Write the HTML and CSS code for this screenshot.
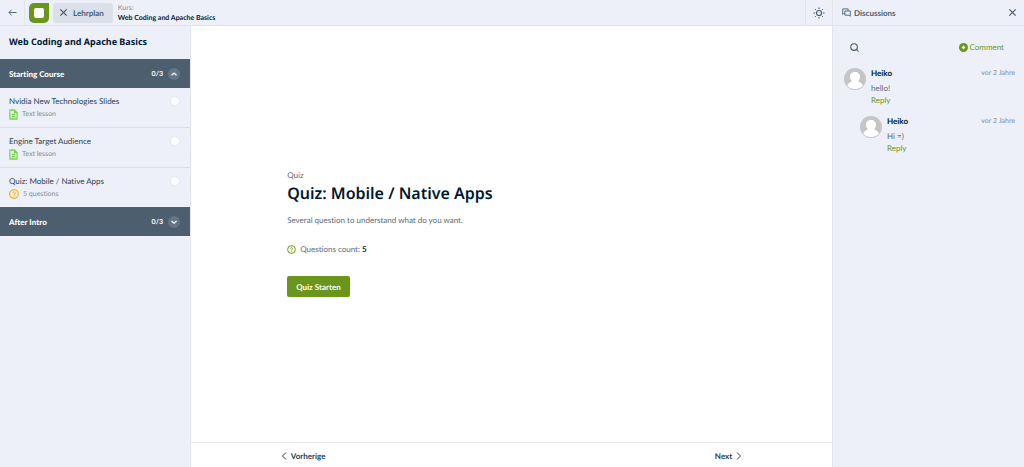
FILE: index.html
```html
<!DOCTYPE html>
<html lang="de">
<head>
<meta charset="utf-8">
<meta name="viewport" content="width=device-width, initial-scale=1">
<title>Web Coding and Apache Basics</title>
<link rel="stylesheet" href="styles.css">
</head>
<body>
<svg class="defs" aria-hidden="true">
  <symbol id="doc" viewBox="0 0 10 12"><path d="M1 1h5l3 3v7H1z M6 1v3h3 M3 6h4 M3 8.500h4" fill="none" stroke="currentColor" stroke-width="1.400" stroke-linejoin="round"/></symbol>
  <symbol id="question" viewBox="0 0 12 12"><circle cx="6" cy="6" r="5.200" fill="none" stroke="currentColor" stroke-width="1.300"/><path d="M4.500 4.700a1.500 1.300 0 1 1 2.200 1.200q-.7.300-.7 1 M6 8.200v1" fill="none" stroke="currentColor" stroke-width="1.200"/></symbol>
  <symbol id="cross" viewBox="0 0 10 10"><path d="M1.500 1.500l7 7M8.500 1.500l-7 7" fill="none" stroke="currentColor" stroke-width="1.400"/></symbol>
  <symbol id="avatar" viewBox="0 0 22 22"><circle cx="11" cy="11" r="11" fill="#c3c5c7"/><path d="M11 4c3 0 5 2 5 4.800 0 2-.9 3.600-2.100 4.600 2.300.6 4.300 1.800 4.900 4.400a11 11 0 0 1-15.600 0c.6-2.600 2.600-3.800 4.900-4.400C6.900 12.400 6 10.800 6 8.800 6 6 8 4 11 4z" fill="#fff"/></symbol>
</svg>
<div class="app">
  <div class="workspace">
    <header class="topbar">
      <button class="back" aria-label="Zurück"><svg class="icon" viewBox="0 0 10 10"><path d="M9.500 5H1M4 2L1 5l3 3" fill="none" stroke="currentColor"/></svg></button>
      <a class="logo" href="#" aria-label="Startseite"><svg viewBox="0 0 20 20"><path d="M5 0h15v15a5 5 0 0 1-5 5H5a5 5 0 0 1-5-5V5a5 5 0 0 1 5-5z" fill="#6b961c"/><rect x="5" y="5" width="10" height="10" rx="2" fill="#fff"/></svg></a>
      <button class="curriculum-toggle"><svg class="icon"><use href="#cross"/></svg>Lehrplan</button>
      <div class="course"><span class="course-label">Kurs:</span><strong>Web Coding and Apache Basics</strong></div>
      <button class="theme" aria-label="Farbmodus"><svg viewBox="0 0 12 12"><g fill="none" stroke="currentColor"><circle cx="6" cy="6" r="2.500" stroke-width="1.200"/><path d="M6 .5v1.700M6 9.800v1.700M.5 6h1.700M9.800 6h1.700M2.100 2.100l1 1M8.900 8.900l1 1M9.900 2.100l-1 1M3.100 8.900l-1 1"/></g></svg></button>
    </header>
    <div class="body">
      <nav class="sidebar" aria-label="Lehrplan">
        <h2 class="sidebar-title">Web Coding and Apache Basics</h2>
        <button class="section" aria-expanded="true"><span class="section-name">Starting Course</span><span class="progress">0/3</span><span class="chevron"><svg viewBox="0 0 12 12"><path d="M3.500 7.300L6 5l2.500 2.300" fill="none" stroke="currentColor" stroke-width="1.200"/></svg></span></button>
        <ul class="lessons">
          <li><a class="lesson" href="#"><span class="lesson-name">Nvidia New Technologies Slides</span><span class="status"></span><span class="kind"><svg class="doc"><use href="#doc"/></svg>Text lesson</span></a></li>
          <li><a class="lesson" href="#"><span class="lesson-name">Engine Target Audience</span><span class="status"></span><span class="kind"><svg class="doc"><use href="#doc"/></svg>Text lesson</span></a></li>
          <li><a class="lesson" href="#"><span class="lesson-name">Quiz: Mobile / Native Apps</span><span class="status"></span><span class="kind"><svg class="question"><use href="#question"/></svg>5 questions</span></a></li>
        </ul>
        <button class="section" aria-expanded="false"><span class="section-name">After Intro</span><span class="progress">0/3</span><span class="chevron"><svg viewBox="0 0 12 12"><path d="M3.500 5L6 7.300 8.500 5" fill="none" stroke="currentColor" stroke-width="1.200"/></svg></span></button>
      </nav>
      <div class="content">
        <main class="quiz">
          <div class="quiz-inner">
            <p class="eyebrow">Quiz</p>
            <h1>Quiz: Mobile / Native Apps</h1>
            <p class="intro">Several question to understand what do you want.</p>
            <p class="count"><svg><use href="#question"/></svg><span>Questions count: <b>5</b></span></p>
            <button class="start">Quiz Starten</button>
          </div>
        </main>
        <footer class="pager">
          <a href="#"><svg viewBox="0 0 6 8"><path d="M5 .5L1.500 4 5 7.500" fill="none" stroke="currentColor"/></svg>Vorherige</a>
          <a href="#">Next<svg viewBox="0 0 6 8"><path d="M1 .5L4.500 4 1 7.500" fill="none" stroke="currentColor"/></svg></a>
        </footer>
      </div>
    </div>
  </div>
  <aside class="discussions">
    <header class="discussions-head">
      <svg class="bubbles" viewBox="0 0 10 10"><path d="M3 6H2L.8 7.200V1h6v2M3.200 3.300h6v5.900L7.800 8H3.200z" fill="none" stroke="currentColor"/></svg>
      <h2>Discussions</h2>
      <button aria-label="Schließen"><svg class="icon"><use href="#cross"/></svg></button>
    </header>
    <div class="tools">
      <button class="search" aria-label="Suchen"><svg viewBox="0 0 10 10"><circle cx="4.500" cy="4.500" r="3.700" fill="none" stroke="currentColor" stroke-width="1.200"/><path d="M7.200 7.200l2.300 2.300" stroke="currentColor" stroke-width="1.200"/></svg></button>
      <button class="comment-new"><svg viewBox="0 0 8 8"><circle cx="4" cy="4" r="4" fill="currentColor"/><path d="M4 2.500v3M2.500 4h3" stroke="#fff" stroke-width="1.200"/></svg>Comment</button>
    </div>
    <article class="comment"><svg class="avatar"><use href="#avatar"/></svg><div class="comment-main"><div class="comment-head"><strong>Heiko</strong><time>vor 2 Jahre</time></div><p>hello!</p><button>Reply</button></div></article>
    <article class="comment reply"><svg class="avatar"><use href="#avatar"/></svg><div class="comment-main"><div class="comment-head"><strong>Heiko</strong><time>vor 2 Jahre</time></div><p>Hi =)</p><button>Reply</button></div></article>
  </aside>
</div>
</body>
</html>
```

FILE: styles.css
```css
* { box-sizing: border-box; }
body { margin: 0; color: #273e52; background: #fff; font: 8px/12px Lato, "Liberation Sans", sans-serif; font-variant-ligatures: none; text-rendering: geometricPrecision; }
h1, h2, p, ul { margin: 0; padding: 0; }
ul { list-style: none; }
a { color: inherit; text-decoration: none; }
button { margin: 0; padding: 0; border: 0; color: inherit; background: none; font: inherit; text-rendering: inherit; cursor: pointer; }
svg { display: block; flex: none; }
.defs { position: absolute; width: 0; height: 0; }
.icon { width: 9px; height: 9px; }
.app { display: grid; grid-template-columns: minmax(0, 1fr) 192px; min-height: 100vh; }
.workspace { display: flex; flex-direction: column; }
.topbar { display: flex; align-items: center; height: 26px; background: #edf0f8; border-bottom: 1px solid #e0e4eb; color: #4d5e6f; }
.back { display: flex; align-items: center; justify-content: center; width: 25px; height: 100%; border-right: 1px solid #e0e4eb; }
.logo { margin-left: 4px; }
.logo svg { width: 20px; height: 20px; }
.curriculum-toggle { display: flex; align-items: center; gap: 5px; height: 20px; margin-left: 4px; padding: 0 9px 0 6px; border-radius: 3px; background: #dbdfe7; font-weight: 700; }
.course { display: flex; flex-direction: column; margin-left: 5px; line-height: 10px; font-size: 7px; color: #001931; }
.course-label { color: #808c98; }
.theme { display: flex; align-items: center; justify-content: center; width: 27px; height: 100%; margin-left: auto; border-left: 1px solid #e0e4eb; }
.theme svg { width: 12px; height: 12px; }
.body { display: grid; flex: 1; grid-template-columns: 191px minmax(0, 1fr); }
.sidebar { background: #edf0f8; border-right: 1px solid #e0e4eb; }
.sidebar-title { padding: 10px 9px 11px; color: #001931; font: 700 9px/12px "Noto Sans", sans-serif; }
.section { display: flex; align-items: center; gap: 5px; width: 100%; height: 29px; padding: 0 10px 0 9px; color: #fff; background: #4d5e6f; font-weight: 700; text-align: left; }
.section-name { flex: 1; font-weight: 900; }
.progress { font-size: 7px; }
.chevron { border-radius: 50%; background: #667585; }
.chevron svg { width: 12px; height: 12px; }
.lesson { display: grid; grid-template-columns: 1fr auto; align-items: center; row-gap: 1px; padding: 7px 10px 7px 9px; border-bottom: 1px solid #dbdfe7; }
.lessons li:last-child .lesson { border-bottom: 0; }
.status { width: 10px; height: 10px; border: 1px solid #e6eaf0; border-radius: 50%; background: #fff; }
.kind { display: flex; align-items: center; gap: 4px; color: #808c98; font-size: 7px; }
.doc { width: 9px; height: 11px; color: #75d64b; }
.question { width: 10px; height: 10px; color: #ffa800; }
.content { display: flex; flex-direction: column; }
.quiz { display: flex; flex: 1; align-items: center; justify-content: center; padding-bottom: 2px; }
.quiz-inner { width: 70%; }
.eyebrow { color: #5c6b7a; }
h1 { margin-top: 1px; color: #001931; font: 600 16px/22px "Noto Sans", sans-serif; }
.intro { margin-top: 10px; color: #5c6b7a; font-size: 8px; }
.count { display: flex; align-items: center; gap: 4px; margin-top: 17px; color: #5c6b7a; }
.count svg { width: 9px; height: 9px; color: #6b961c; }
.count b { color: #001931; }
.start { height: 21px; margin-top: 21px; padding: 0 9px; border-radius: 2px; color: #fff; background: #6b961c; font-weight: 700; }
.pager { display: flex; justify-content: space-between; height: 25px; padding: 2px 14% 0; border-top: 1px solid #e3e8f0; }
.pager a { display: flex; align-items: center; gap: 4px; font-weight: 700; }
.pager svg { width: 6px; height: 8px; }
.discussions { background: #edf0f8; border-left: 1px solid #e0e4eb; }
.discussions-head { display: flex; align-items: center; height: 26px; padding: 0 7px 0 9px; border-bottom: 1px solid #e0e4eb; color: #4d5e6f; }
.discussions-head h2 { flex: 1; margin-left: 3px; font-size: 8px; }
.bubbles { width: 9px; height: 9px; }
.tools { display: flex; align-items: center; justify-content: space-between; padding: 15px 20px 14px 17px; color: #4d5e6f; }
.tools svg { width: 9px; height: 9px; }
.comment-new { display: flex; align-items: center; gap: 2px; color: #6b961c; }
.comment { display: flex; gap: 5px; padding: 0 9px 9px 11px; }
.reply { padding-left: 27px; }
.avatar { width: 22px; height: 22px; margin-top: 1px; }
.comment-main { flex: 1; }
.comment-head { display: flex; justify-content: space-between; color: #001931; }
.comment time { color: #808c98; font-size: 7px; }
.comment p { margin-top: 3px; color: #5c6b7a; }
.comment button { display: block; color: #6b961c; }
```
